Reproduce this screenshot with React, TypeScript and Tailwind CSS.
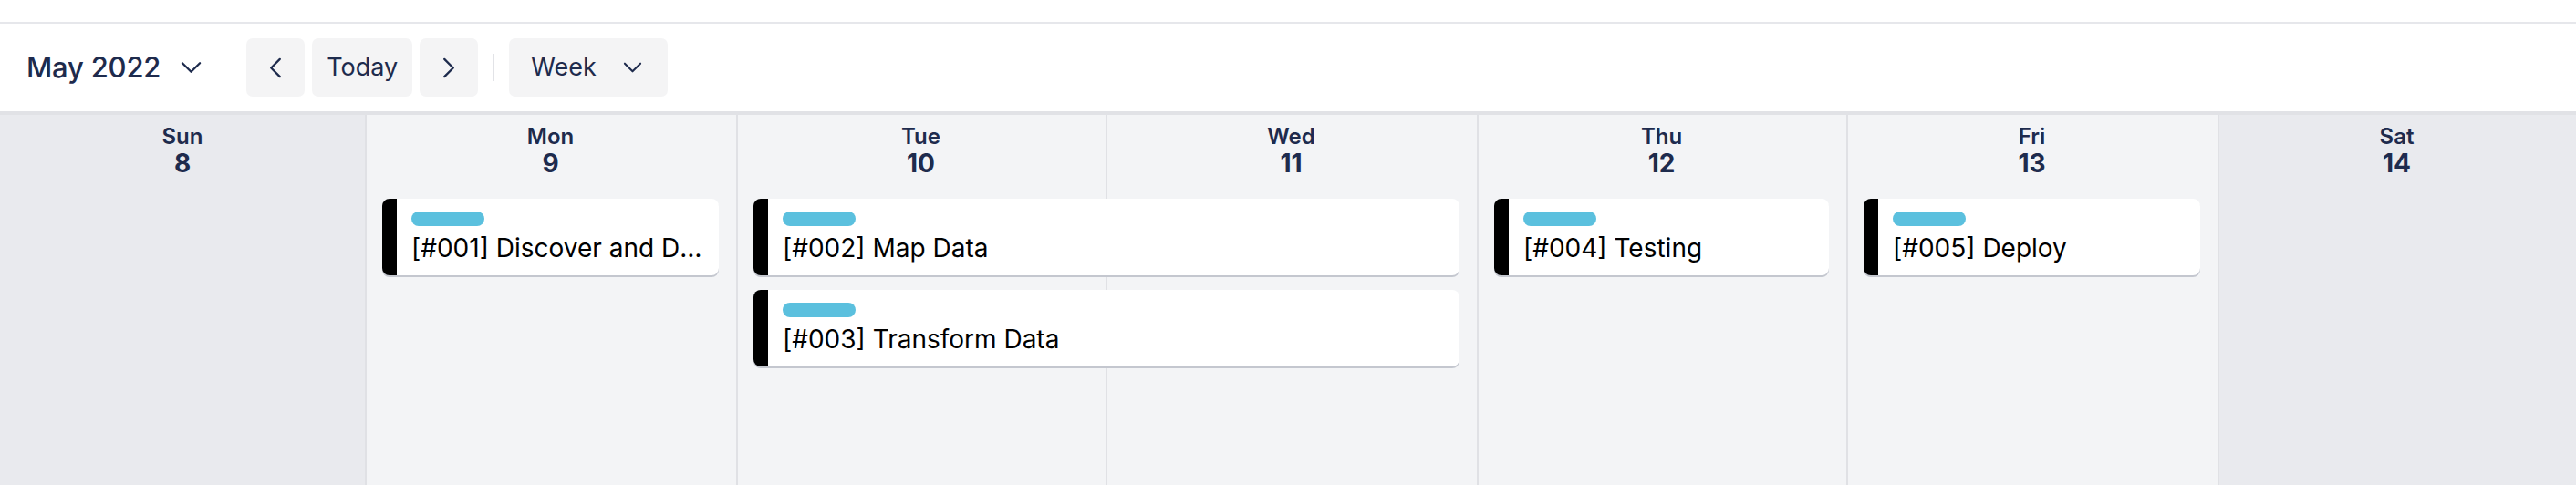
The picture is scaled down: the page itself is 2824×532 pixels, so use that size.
import React from "react";

const Chevron = ({ dir, className }: { dir: "down" | "left" | "right"; className?: string }) => {
  if (dir === "down")
    return (
      <svg className={className} viewBox="0 0 24 14" fill="none" stroke="#1e2b4d" strokeWidth="2.4" strokeLinecap="round" strokeLinejoin="round">
        <polyline points="2,2 12,12 22,2" />
      </svg>
    );
  if (dir === "left")
    return (
      <svg className={className} viewBox="0 0 14 24" fill="none" stroke="#1e2b4d" strokeWidth="2.4" strokeLinecap="round" strokeLinejoin="round">
        <polyline points="12,2 2,12 12,22" />
      </svg>
    );
  return (
    <svg className={className} viewBox="0 0 14 24" fill="none" stroke="#1e2b4d" strokeWidth="2.4" strokeLinecap="round" strokeLinejoin="round">
      <polyline points="2,2 12,12 2,22" />
    </svg>
  );
};

const days = [
  { name: "Sun", date: "8", weekend: true },
  { name: "Mon", date: "9" },
  { name: "Tue", date: "10" },
  { name: "Wed", date: "11" },
  { name: "Thu", date: "12" },
  { name: "Fri", date: "13" },
  { name: "Sat", date: "14", weekend: true },
];

const colStarts = [
  "col-start-1",
  "col-start-2",
  "col-start-3",
  "col-start-4",
  "col-start-5",
  "col-start-6",
  "col-start-7",
];

const EventCard = ({ title, className }: { title: string; className: string }) => (
  <div
    className={`${className} mx-[19px] h-[84px] bg-white rounded-[8px] border-l-[16px] border-black shadow-[0_2px_0_#c4c7cf] pl-[16px] pr-[18px] pt-[14px] min-w-0 overflow-hidden`}
  >
    <div className="w-[80px] h-[16px] rounded-full bg-[#5bc0de]" />
    <div className="mt-[8px] text-[28px] leading-[32px] text-black truncate">{title}</div>
  </div>
);

export default function App() {
  return (
    <div className="w-[2824px] h-[532px] bg-white overflow-hidden flex flex-col font-['Inter','Noto_Sans',sans-serif] text-[#1e2b4d]">
      <div className="h-[24px] shrink-0" />
      <div className="h-[98px] shrink-0 border-t-2 border-[#e6e7eb] flex items-center pl-[29px]">
        <div className="flex items-center">
          <span className="text-[31px] leading-[40px] font-medium tracking-[-0.2px]">May 2022</span>
          <Chevron dir="down" className="w-[23px] h-[14px] ml-[22px]" />
        </div>
        <div className="flex items-center ml-[49px] gap-[8px]">
          <button className="w-[64px] h-[64px] rounded-[7px] bg-[#f4f4f5] flex items-center justify-center">
            <Chevron dir="left" className="w-[14px] h-[23px]" />
          </button>
          <button className="w-[110px] h-[64px] rounded-[7px] bg-[#f4f4f5] flex items-center justify-center text-[27px]">
            Today
          </button>
          <button className="w-[64px] h-[64px] rounded-[7px] bg-[#f4f4f5] flex items-center justify-center">
            <Chevron dir="right" className="w-[14px] h-[23px]" />
          </button>
          <div className="w-[2px] h-[30px] bg-[#e2e3e7] mx-[8px]" />
          <button className="w-[174px] h-[64px] rounded-[7px] bg-[#f4f4f5] flex items-center pl-[24px] text-[27px]">
            Week
            <Chevron dir="down" className="w-[21px] h-[12px] ml-[29px]" />
          </button>
        </div>
      </div>
      <div className="flex-1 border-t-4 border-[#e1e2e6] grid grid-cols-[400px_407px_405px_407px_405px_407px_1fr] grid-rows-[67px_109px_100px_1fr]">
        {days.map((d, i) => (
          <div
            key={d.name + "bg"}
            className={`${colStarts[i]} row-start-1 row-end-5 ${d.weekend ? "bg-[#e9eaee]" : "bg-[#f3f4f6]"} ${i > 0 ? "border-l-2 border-[#e0e1e5]" : ""}`}
          />
        ))}
        {days.map((d, i) => (
          <div key={d.name} className={`${colStarts[i]} row-start-1 flex flex-col items-center pt-[10px]`}>
            <span className="text-[24px] leading-[28px] font-semibold">{d.name}</span>
            <span className="text-[28px] leading-[30px] font-bold">{d.date}</span>
          </div>
        ))}
        <EventCard className="col-start-2 col-span-1 row-start-2 mt-[25px]" title="[#001] Discover and Define" />
        <EventCard className="col-start-3 col-span-2 row-start-2 mt-[25px]" title="[#002] Map Data" />
        <EventCard className="col-start-3 col-span-2 row-start-3 mt-[16px]" title="[#003] Transform Data" />
        <EventCard className="col-start-5 col-span-1 row-start-2 mt-[25px]" title="[#004] Testing" />
        <EventCard className="col-start-6 col-span-1 row-start-2 mt-[25px]" title="[#005] Deploy" />
      </div>
    </div>
  );
}
